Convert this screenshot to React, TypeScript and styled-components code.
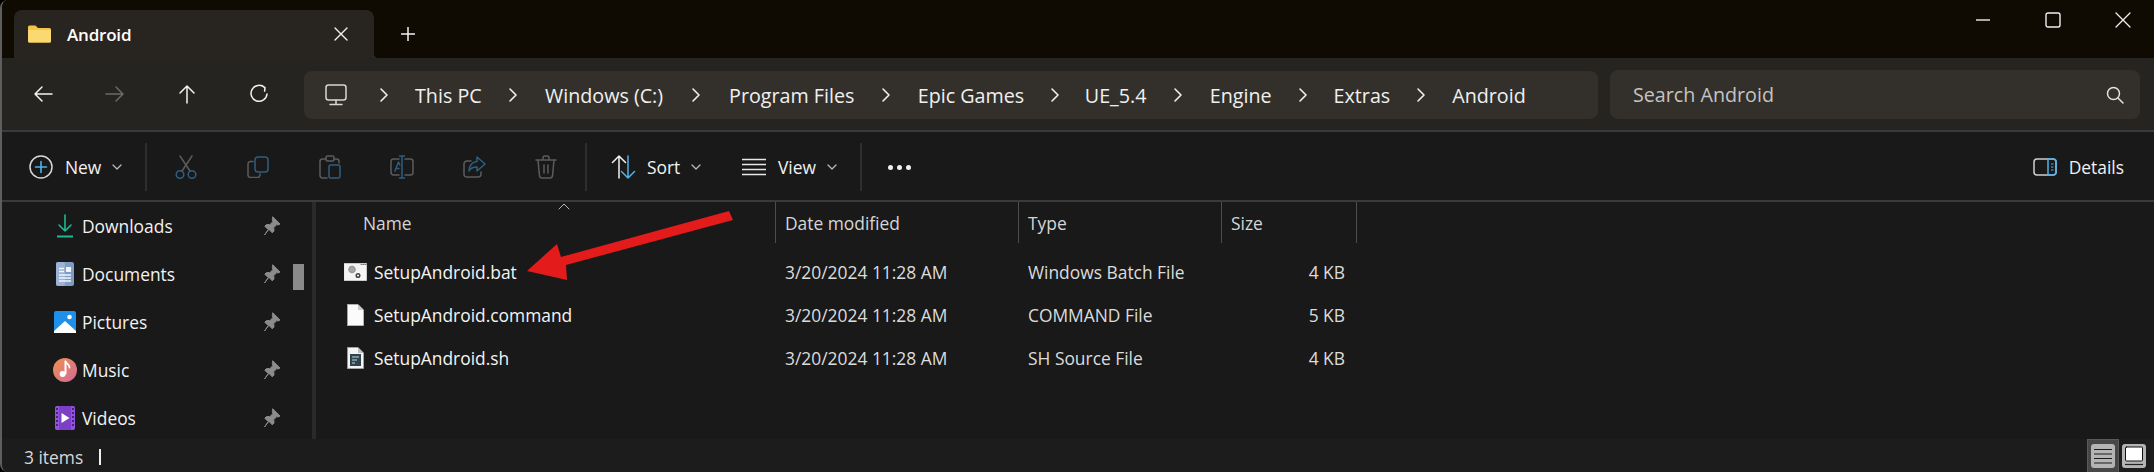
import React from 'react';
import styled, { createGlobalStyle } from 'styled-components';

const Global = createGlobalStyle`
  html, body { margin: 0; padding: 0; background: #000; }
  * { box-sizing: border-box; }
  body { font-family: "Open Sans", "Noto Sans", "Liberation Sans", sans-serif; }
`;

const Window = styled.div`
  position: relative;
  width: 2154px;
  height: 472px;
  display: flex;
  flex-direction: column;
  overflow: hidden;
  background: #191919;
  border-left: 2px solid #5e5e5e;
  border-radius: 8px 0 0 8px;
  color: #f2f2f2;
`;
const TitleBar = styled.div`
  height: 58px;
  flex: none;
  display: flex;
  background: #0f0a02;
`;
const Tab = styled.div`
  position: relative;
  margin: 10px 0 0 12px;
  width: 360px;
  height: 48px;
  display: flex;
  align-items: center;
  padding: 0 25px 0 14px;
  background: #282521;
  border-radius: 8px 8px 0 0;
  font-size: 17px;
  font-weight: 600;
  color: #fff;
  &::after {
    content: '';
    position: absolute;
    right: -5px;
    bottom: 0;
    width: 5px;
    height: 5px;
    background: radial-gradient(circle at 100% 0, transparent 5px, #282521 5.5px);
  }
`;
const TabLabel = styled.span`
  margin-left: 16px;
  flex: 1;
  letter-spacing: -0.2px;
`;
const NewTab = styled.div`
  margin: 10px 0 0 26px;
  height: 48px;
  display: flex;
  align-items: center;
`;
const Caption = styled.div`
  margin-left: auto;
  margin-right: -4px;
  display: flex;
`;
const CaptionButton = styled.div`
  width: 70px;
  height: 40px;
  display: flex;
  align-items: center;
  justify-content: center;
`;
const NavBar = styled.div`
  height: 72px;
  flex: none;
  display: flex;
  align-items: center;
  background: #262420;
`;
const NavButtons = styled.div`
  width: 302px;
  padding-left: 5px;
  display: flex;
`;
const NavButton = styled.div`
  width: 72px;
  height: 40px;
  display: flex;
  align-items: center;
  justify-content: center;
`;
const Address = styled.div`
  width: 1294px;
  height: 48px;
  margin-top: 2px;
  display: flex;
  align-items: center;
  padding-left: 21px;
  background: #33302b;
  border-radius: 8px;
  font-size: 19.7px;
  color: #f0f0f0;
`;
const Crumb = styled.span`
  white-space: nowrap;
`;
const CrumbSep = styled.span<{ $w: number }>`
  width: ${p => p.$w}px;
  flex: none;
  display: flex;
  justify-content: center;
`;
const MonitorWrap = styled.span`
  display: flex;
  margin-right: 6px;
`;
const Search = styled.div`
  width: 530px;
  height: 49px;
  margin: 1px 0 0 12px;
  display: flex;
  align-items: center;
  justify-content: space-between;
  padding: 0 16px 0 23px;
  background: #33302b;
  border-radius: 8px;
  font-size: 19.7px;
  color: #c4c4c2;
`;
const Rule = styled.div`
  height: 2px;
  flex: none;
  background: #3a3a3a;
`;
const Toolbar = styled.div`
  height: 68px;
  flex: none;
  display: flex;
  align-items: center;
  padding-top: 2px;
  background: #191919;
  font-size: 17.4px;
`;
const ToolSep = styled.div`
  width: 2px;
  height: 48px;
  flex: none;
  background: #2e2e2e;
`;
const NewButton = styled.div`
  width: 143px;
  padding-left: 27px;
  display: flex;
  align-items: center;
`;
const ToolLabel = styled.span<{ $gap: number }>`
  margin-left: ${p => p.$gap}px;
`;
const CaretWrap = styled.span`
  display: flex;
  margin-left: 10px;
`;
const ClipGroup = styled.div`
  width: 438px;
  padding-left: 3px;
  display: flex;
`;
const ClipButton = styled.div`
  width: 72px;
  height: 40px;
  display: flex;
  align-items: center;
  justify-content: center;
`;
const SortButton = styled.div`
  width: 155px;
  padding-left: 24px;
  display: flex;
  align-items: center;
`;
const ViewButton = styled.div`
  width: 118px;
  display: flex;
  align-items: center;
`;
const Dots = styled.div`
  margin-left: 26px;
  display: flex;
  gap: 4px;
`;
const Dot = styled.span`
  width: 5px;
  height: 5px;
  border-radius: 50%;
  background: #f0f0f0;
`;
const DetailsButton = styled.div`
  margin-left: auto;
  padding-right: 30px;
  display: flex;
  align-items: center;
`;
const Body = styled.div`
  flex: 1;
  min-height: 0;
  display: flex;
  overflow: hidden;
  background: #191919;
`;
const Sidebar = styled.div`
  position: relative;
  width: 310px;
  flex: none;
  overflow: hidden;
  font-size: 17.4px;
`;
const NavRow = styled.div`
  height: 48px;
  display: flex;
  align-items: center;
  padding-left: 50px;
`;
const NavIcon = styled.span`
  width: 26px;
  height: 26px;
  flex: none;
  display: flex;
  align-items: center;
  justify-content: center;
`;
const NavLabel = styled.span`
  width: 181px;
  margin-left: 4px;
`;
const Thumb = styled.div`
  position: absolute;
  left: 291px;
  top: 62px;
  width: 11px;
  height: 26px;
  background: #8a8a8a;
`;
const Splitter = styled.div`
  width: 4px;
  flex: none;
  background: #2a2a2a;
`;
const Main = styled.div`
  position: relative;
  flex: 1;
  min-width: 0;
`;
const columns = '460px 243px 203px 135px';
const Header = styled.div`
  height: 41px;
  display: grid;
  grid-template-columns: ${columns};
  font-size: 17.4px;
  color: #d6d6d6;
`;
const HeadCell = styled.div<{ $pad: number }>`
  display: flex;
  align-items: center;
  padding-left: ${p => p.$pad}px;
  border-right: 1px solid #4c4c4c;
`;
const SortCaret = styled.span`
  position: absolute;
  left: 242px;
  top: 1px;
  display: flex;
`;
const Rows = styled.div`
  padding-top: 7px;
`;
const Row = styled.div`
  height: 43px;
  display: grid;
  grid-template-columns: ${columns};
  align-items: center;
  font-size: 17.4px;
  color: #dcdcdc;
`;
const NameCell = styled.div`
  display: flex;
  align-items: center;
  padding-left: 28px;
  color: #f4f4f4;
`;
const FileIcon = styled.span`
  width: 23px;
  height: 26px;
  flex: none;
  margin-right: 7px;
  display: flex;
  align-items: center;
  justify-content: center;
`;
const DateCell = styled.div`
  padding-left: 9px;
`;
const SizeCell = styled.div`
  text-align: right;
  padding-right: 12px;
`;
const Arrow = styled.svg`
  position: absolute;
  left: 0;
  top: 0;
  pointer-events: none;
`;
const StatusBar = styled.div`
  height: 33px;
  flex: none;
  display: flex;
  align-items: center;
  padding: 2px 0 0 22px;
  background: #1c1c1c;
  font-size: 17.4px;
  color: #d8d8d8;
`;
const Cursor = styled.span`
  width: 2px;
  height: 16px;
  margin-left: 16px;
  background: #f0f0f0;
`;
const ViewSwitch = styled.div`
  margin: -2px 0 0 auto;
  display: flex;
  align-items: center;
  height: 33px;
  padding-right: 8px;
`;
const ActiveSwitch = styled.div`
  width: 32px;
  height: 33px;
  display: flex;
  align-items: center;
  justify-content: center;
  background: #474747;
  border: 1px solid #5a5a5a;
  border-bottom: 0;
  margin-right: 3px;
`;
const SwitchFace = styled.div`
  width: 24px;
  height: 24px;
  border-radius: 3px;
  background: #b4b4b4;
  display: flex;
  align-items: center;
  justify-content: center;
`;

const W = '#f2f2f2';
const B = '#2c5f82';
const G = '#5c5c5c';

const Ico: React.FC<{ w: number; h: number; children: React.ReactNode }> = ({ w, h, children }) => (
  <svg width={w} height={h} viewBox={`0 0 ${w} ${h}`} fill="none" strokeWidth="1.5" strokeLinecap="round" strokeLinejoin="round" style={{ display: 'block', flex: 'none' }}>
    {children}
  </svg>
);

const Chevron = () => (
  <Ico w={10} h={16}><path d="M2 2l6 6-6 6" stroke="#efefef" strokeWidth="1.6" /></Ico>
);
const Caret = () => (
  <Ico w={12} h={8}><path d="M2 2l4 4 4-4" stroke="#bdbdbd" strokeWidth="1.2" /></Ico>
);

const crumbs: [string, number][] = [
  ['This PC', 62],
  ['Windows (C:)', 63.4],
  ['Program Files', 66],
  ['Epic Games', 63.4],
  ['UE_5.4', 60.6],
  ['Engine', 63.4],
  ['Extras', 62],
  ['Android', 62],
];

const PinIcon = () => (
  <Ico w={18} h={20}>
    <path d="M10 1l7 7-2 1-1.200-.4-3 3 .2 3.400-1.800 1.800-3.400-3.600L1.500 19l3.800-5.300-3.500-3.500L3.600 8.500l3.200.2 3-3L9.400 4z" fill="#8b8b8b" stroke="#8b8b8b" strokeWidth="1" />
  </Ico>
);

const navItems: { label: string; icon: React.ReactNode }[] = [
  {
    label: 'Downloads',
    icon: (
      <Ico w={18} h={24}>
        <path d="M9 1v16M3 11l6 6 6-6" stroke="#1eb893" strokeWidth="1.6" />
        <path d="M1 22.500h16" stroke="#1eb893" strokeWidth="2" strokeLinecap="butt" />
      </Ico>
    ),
  },
  {
    label: 'Documents',
    icon: (
      <Ico w={18} h={24}>
        <rect x="0" y="0" width="18" height="24" rx="2" fill="#7f9cc4" />
        <rect x="0" y="0" width="9" height="24" rx="2" fill="#a6bddb" opacity="0.7" />
        <path d="M3 6.500h5M3 9.500h5M3 13h12M3 16h12M3 19h12" stroke="#f1f5fb" strokeWidth="1.4" strokeLinecap="butt" />
        <rect x="10" y="5" width="5" height="5" fill="#f1f5fb" />
      </Ico>
    ),
  },
  {
    label: 'Pictures',
    icon: (
      <Ico w={22} h={22}>
        <rect x="0" y="0" width="22" height="22" rx="2" fill="#1e90ea" />
        <circle cx="15.500" cy="6" r="2.300" fill="#fff" />
        <path d="M0 20l11-10 11 10v2H0z" fill="#fff" />
      </Ico>
    ),
  },
  {
    label: 'Music',
    icon: (
      <Ico w={24} h={24}>
        <defs>
          <linearGradient id="mg" x1="0" y1="0" x2="1" y2="1">
            <stop offset="0" stopColor="#ef9150" />
            <stop offset="1" stopColor="#d06a9a" />
          </linearGradient>
        </defs>
        <circle cx="12" cy="12" r="12" fill="url(#mg)" />
        <path d="M12.500 3.500v12" stroke="#fff" strokeWidth="2" />
        <path d="M12.500 3.500c1 2.500 4 2.500 4 6" stroke="#fff" strokeWidth="1.800" />
        <circle cx="9.600" cy="16" r="3" fill="#fff" />
      </Ico>
    ),
  },
  {
    label: 'Videos',
    icon: (
      <Ico w={20} h={24}>
        <rect x="0" y="0" width="20" height="24" rx="2" fill="#9254e0" />
        <rect x="4" y="0" width="12" height="24" fill="#7c3fc8" />
        <path d="M6.500 7l8 5-8 5z" fill="#fff" />
        <path d="M1 3h2M1 7h2M1 11h2M1 15h2M1 19h2M17 3h2M17 7h2M17 11h2M17 15h2M17 19h2" stroke="#2a1a4a" strokeWidth="1.4" strokeLinecap="butt" />
      </Ico>
    ),
  },
];

const BatIcon = () => (
  <Ico w={23} h={18}>
    <rect x="0" y="0" width="23" height="18" fill="#f4f4f4" stroke="#8a8a8a" strokeWidth="0.800" />
    <path d="M17 1.500h1M19 1.500h1M21 1.500h1" stroke="#777" strokeWidth="1" />
    <circle cx="8" cy="6.500" r="3" fill="#a8a8a8" stroke="#9a9a9a" strokeWidth="1.600" strokeDasharray="1.600 1" />
    <circle cx="14" cy="12.500" r="1.800" fill="#f4f4f4" stroke="#444" strokeWidth="1.500" />
  </Ico>
);
const PlainFile = () => (
  <Ico w={17} h={22}>
    <path d="M.5.500H11L16.500 6v15.500H.5z" fill="#fbfbfb" stroke="#bdbdbd" strokeWidth="0.800" />
    <path d="M11 .5V6h5.500z" fill="#c9c9c9" />
  </Ico>
);
const ShFile = () => (
  <Ico w={17} h={22}>
    <path d="M.5.500H11L16.500 6v15.500H.5z" fill="#f4f4f4" stroke="#aaa" strokeWidth="0.800" />
    <path d="M11 .5V6h5.500z" fill="#bdbdbd" />
    <rect x="3" y="7" width="11" height="12" fill="#2e4450" />
    <path d="M5 10h7M5 13h5M5 16h3" stroke="#c9d4da" strokeWidth="1" strokeLinecap="butt" />
  </Ico>
);

const files = [
  { name: 'SetupAndroid.bat', type: 'Windows Batch File', size: '4 KB', icon: <BatIcon /> },
  { name: 'SetupAndroid.command', type: 'COMMAND File', size: '5 KB', icon: <PlainFile /> },
  { name: 'SetupAndroid.sh', type: 'SH Source File', size: '4 KB', icon: <ShFile /> },
];

export default function App() {
  return (
    <Window>
      <Global />
      <TitleBar>
        <Tab>
          <Ico w={23} h={18}>
            <path d="M0 2a1.500 1.500 0 0 1 1.500-1.500h6L10 3h11.500A1.500 1.500 0 0 1 23 4.500V16a1.500 1.500 0 0 1-1.500 1.500h-20A1.500 1.500 0 0 1 0 16z" fill="#f6c544" stroke="none" />
            <path d="M0 5h23v11a1.500 1.500 0 0 1-1.500 1.500h-20A1.500 1.500 0 0 1 0 16z" fill="#fbd970" stroke="none" />
          </Ico>
          <TabLabel>Android</TabLabel>
          <Ico w={16} h={16}><path d="M2 2l12 12M14 2L2 14" stroke="#f2f2f2" strokeWidth="1.400" /></Ico>
        </Tab>
        <NewTab>
          <Ico w={16} h={16}><path d="M8 1v14M1 8h14" stroke="#f2f2f2" strokeWidth="1.500" strokeLinecap="butt" /></Ico>
        </NewTab>
        <Caption>
          <CaptionButton><Ico w={16} h={4}><path d="M1 2h14" stroke="#f0f0f0" strokeWidth="1.400" strokeLinecap="butt" /></Ico></CaptionButton>
          <CaptionButton><Ico w={16} h={16}><rect x="1" y="1" width="14" height="14" rx="2" stroke="#f0f0f0" strokeWidth="1.400" /></Ico></CaptionButton>
          <CaptionButton><Ico w={16} h={16}><path d="M1 1l14 14M15 1L1 15" stroke="#f0f0f0" strokeWidth="1.300" /></Ico></CaptionButton>
        </Caption>
      </TitleBar>

      <NavBar>
        <NavButtons>
          <NavButton><Ico w={20} h={18}><path d="M19 9H2M9 2L2 9l7 7" stroke={W} /></Ico></NavButton>
          <NavButton><Ico w={20} h={18}><path d="M1 9h17M11 2l7 7-7 7" stroke="#6b6a68" /></Ico></NavButton>
          <NavButton><Ico w={18} h={20}><path d="M9 19V2M2 9l7-7 7 7" stroke={W} /></Ico></NavButton>
          <NavButton><Ico w={20} h={20}><path d="M15.500 3.500A8 8 0 1 0 18 10M13 1.500l3 2.200-.4 3.400" stroke={W} /></Ico></NavButton>
        </NavButtons>
        <Address>
          <MonitorWrap>
            <Ico w={22} h={22}>
              <rect x="1" y="1" width="20" height="15" rx="2.500" stroke="#d6d6d6" />
              <path d="M11 16v4M5 20.500h12" stroke="#d6d6d6" />
            </Ico>
          </MonitorWrap>
          {crumbs.map(([label, sep]) => (
            <React.Fragment key={label}>
              <CrumbSep $w={sep}><Chevron /></CrumbSep>
              <Crumb>{label}</Crumb>
            </React.Fragment>
          ))}
        </Address>
        <Search>
          Search Android
          <Ico w={18} h={18}><circle cx="7.500" cy="7.500" r="6" stroke="#e2e2e2" /><path d="M12 12l5 5" stroke="#e2e2e2" /></Ico>
        </Search>
      </NavBar>
      <Rule />

      <Toolbar>
        <NewButton>
          <Ico w={24} h={24}>
            <circle cx="12" cy="12" r="11" stroke="#d8d8d8" />
            <path d="M12 6.500v11M6.500 12h11" stroke="#4fb3ea" strokeWidth="1.600" />
          </Ico>
          <ToolLabel $gap={12}>New</ToolLabel>
          <CaretWrap><Caret /></CaretWrap>
        </NewButton>
        <ToolSep />
        <ClipGroup>
          <ClipButton>
            <Ico w={22} h={24}>
              <path d="M5 1l10 15M17 1L7 16" stroke={G} />
              <circle cx="5" cy="19.500" r="3.800" stroke={B} />
              <circle cx="17" cy="19.500" r="3.800" stroke={B} />
            </Ico>
          </ClipButton>
          <ClipButton>
            <Ico w={22} h={22}>
              <path d="M6 5.500H3.500A2.500 2.500 0 0 0 1 8v11a2.500 2.500 0 0 0 2.500 2.500h7A2.500 2.500 0 0 0 13 19v-1" stroke={G} />
              <rect x="8" y="1" width="13" height="15" rx="3" stroke={B} />
            </Ico>
          </ClipButton>
          <ClipButton>
            <Ico w={22} h={24}>
              <path d="M7 4H3.500A2.500 2.500 0 0 0 1 6.500v14A2.500 2.500 0 0 0 3.500 23H8M15 4h2.500A2.500 2.500 0 0 1 20 6.500V8" stroke={G} />
              <rect x="7" y="1" width="8" height="5" rx="1.500" stroke={G} />
              <rect x="10" y="10" width="11" height="13" rx="2" stroke={B} />
            </Ico>
          </ClipButton>
          <ClipButton>
            <Ico w={24} h={24}>
              <path d="M9 4H3.500A2.500 2.500 0 0 0 1 6.500v11A2.500 2.500 0 0 0 3.500 20H9M15 4h5.500A2.500 2.500 0 0 1 23 6.500v11a2.500 2.500 0 0 1-2.500 2.500H15" stroke={G} />
              <path d="M12 1v22M9.500 1h5M9.500 23h5" stroke={B} />
              <path d="M5 16l3.500-9L9.800 10M6 13.500h3" stroke={B} />
            </Ico>
          </ClipButton>
          <ClipButton>
            <Ico w={23} h={22}>
              <path d="M8 5H4A3 3 0 0 0 1 8v10.500A2.500 2.500 0 0 0 3.500 21H15a3 3 0 0 0 3-3v-2" stroke={G} />
              <path d="M14 1l8 7-8 7v-4c-4 0-6.500 1-8 4 0-5 3-9 8-9.500z" stroke={B} />
            </Ico>
          </ClipButton>
          <ClipButton>
            <Ico w={22} h={24}>
              <path d="M1 5h20M8 5V3a2 2 0 0 1 2-2h2a2 2 0 0 1 2 2v2M3 5l1.500 16A2.500 2.500 0 0 0 7 23h8a2.500 2.500 0 0 0 2.500-2L19 5M9 10v8M13 10v8" stroke={G} />
            </Ico>
          </ClipButton>
        </ClipGroup>
        <ToolSep />
        <SortButton>
          <Ico w={25} h={24}>
            <path d="M8 23V1M1.500 7.500L8 1l6.500 6.500" stroke={W} />
            <path d="M17 1v22M10.500 16.500L17 23l6.500-6.500" stroke="#4fb3ea" />
          </Ico>
          <ToolLabel $gap={11}>Sort</ToolLabel>
          <CaretWrap><Caret /></CaretWrap>
        </SortButton>
        <ViewButton>
          <Ico w={24} h={18}><path d="M0 1.500h24M0 6.500h24M0 11.500h24M0 16.500h24" stroke="#e8e8e8" strokeLinecap="butt" /></Ico>
          <ToolLabel $gap={12}>View</ToolLabel>
          <CaretWrap><Caret /></CaretWrap>
        </ViewButton>
        <ToolSep />
        <Dots><Dot /><Dot /><Dot /></Dots>
        <DetailsButton>
          <Ico w={24} h={18}>
            <rect x="1" y="1" width="22" height="16" rx="3" stroke="#cfcfcf" />
            <path d="M15 1h5a3 3 0 0 1 3 3v10a3 3 0 0 1-3 3h-5z" stroke="#4fb3ea" />
            <path d="M18 6h2.500M18 9h2.500M18 12h2.500" stroke="#4fb3ea" strokeWidth="1.200" strokeLinecap="butt" />
          </Ico>
          <ToolLabel $gap={12}>Details</ToolLabel>
        </DetailsButton>
      </Toolbar>
      <Rule />

      <Body>
        <Sidebar>
          {navItems.map(n => (
            <NavRow key={n.label}>
              <NavIcon>{n.icon}</NavIcon>
              <NavLabel>{n.label}</NavLabel>
              <PinIcon />
            </NavRow>
          ))}
          <Thumb />
        </Sidebar>
        <Splitter />
        <Main>
          <SortCaret><Ico w={12} h={7}><path d="M1 6l5-5 5 5" stroke="#b8b8b8" strokeWidth="1" /></Ico></SortCaret>
          <Header>
            <HeadCell $pad={47}>Name</HeadCell>
            <HeadCell $pad={9}>Date modified</HeadCell>
            <HeadCell $pad={9}>Type</HeadCell>
            <HeadCell $pad={9}>Size</HeadCell>
          </Header>
          <Rows>
            {files.map(f => (
              <Row key={f.name}>
                <NameCell>
                  <FileIcon>{f.icon}</FileIcon>
                  {f.name}
                </NameCell>
                <DateCell>3/20/2024 11:28 AM</DateCell>
                <DateCell>{f.type}</DateCell>
                <SizeCell>{f.size}</SizeCell>
              </Row>
            ))}
          </Rows>
          <Arrow width="440" height="100" viewBox="0 0 440 100">
            <path d="M211 69L241 42 245 55 413 9 417 18 250 63 251 78z" fill="#e31b1b" />
          </Arrow>
        </Main>
      </Body>

      <StatusBar>
        3 items
        <Cursor />
        <ViewSwitch>
          <ActiveSwitch>
            <SwitchFace>
              <Ico w={18} h={16}><path d="M0 1.500h18M0 6h18M0 10.500h18M0 15h18" stroke="#1a1a1a" strokeLinecap="butt" strokeWidth="1.200" /></Ico>
            </SwitchFace>
          </ActiveSwitch>
          <SwitchFace>
            <Ico w={18} h={20}>
              <rect x="0.500" y="1" width="17" height="14" rx="1" fill="#fff" stroke="#111" strokeWidth="1" />
              <path d="M0 18.500h18" stroke="#222" strokeWidth="1.200" strokeLinecap="butt" />
            </Ico>
          </SwitchFace>
        </ViewSwitch>
      </StatusBar>
    </Window>
  );
}
